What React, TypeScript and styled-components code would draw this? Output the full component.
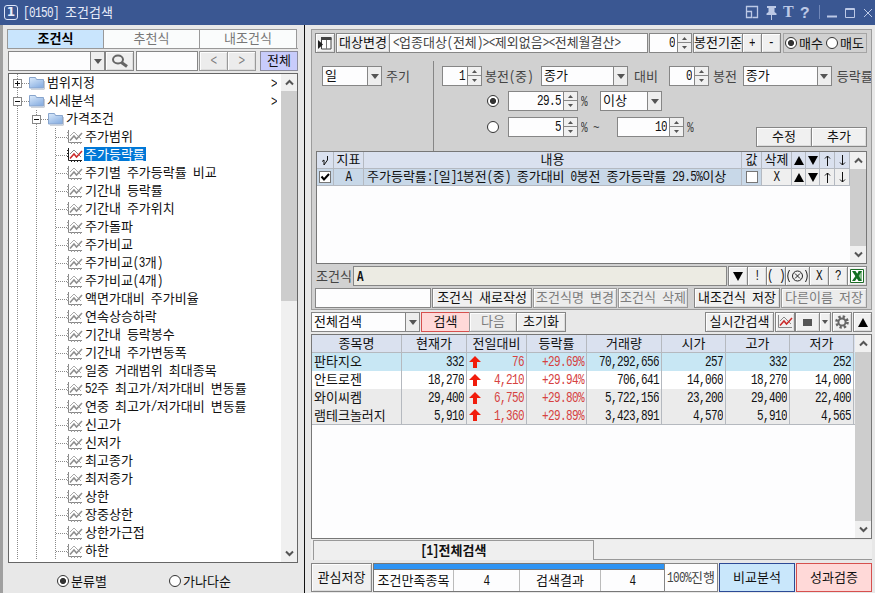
import React from "react";
import styled, { createGlobalStyle, css } from "styled-components";

const Global = createGlobalStyle`
  * { box-sizing: border-box; }
  body { margin: 0; overflow: hidden; }
  #root { width: 875px; height: 593px; overflow: hidden; }
`;

const border = "#868686";

/* ---------- text ---------- */
const Run = styled.span`
  display: inline-block;
  flex: none;
  height: 16px;
  line-height: 14px;
  padding-bottom: 2px;
  white-space: pre;
`;
const Latin = styled.span`
  display: inline-block;
  font-family: "Liberation Mono", monospace;
  font-size: 11px;
  letter-spacing: -0.6px;
  line-height: 12px;
  white-space: pre;
  transform: scaleY(1.25);
  transform-origin: 50% 76%;
`;
const T = ({ children }: { children: string }) => (
  <Run>
    {children.split(/([\x20-\x7e]+)/).map((s, i) =>
      s === "" ? null : i % 2 ? <Latin key={i}>{s}</Latin> : <React.Fragment key={i}>{s}</React.Fragment>
    )}
  </Run>
);

/* ---------- shell ---------- */
const Window = styled.div`
  width: 875px;
  height: 593px;
  display: flex;
  flex-direction: column;
  background: #e8e8e8;
  color: #111;
  font: 13px/16px "Noto Sans CJK KR", "Noto Sans", sans-serif;
  white-space: nowrap;
`;
const TitleBar = styled.header`
  height: 25px;
  flex: none;
  background: #3a5792;
  color: #e9eefb;
  display: flex;
  align-items: center;
  padding-left: 4px;
`;
const Badge = styled.span`
  width: 14px;
  height: 15px;
  margin-right: 5px;
  border: 1px solid #dfe7fa;
  border-radius: 3px;
  font: bold 12px/13px "DejaVu Sans", sans-serif;
  text-align: center;
`;
const TitleIcons = styled.svg`
  margin-left: auto;
  width: 130px;
  height: 25px;
`;
const Body = styled.div`
  flex: 1;
  display: flex;
  min-height: 0;
`;
const Left = styled.aside`
  width: 305px;
  flex: none;
  border-left: 3px solid #a0a0a0;
  border-right: 1px solid #111;
  padding: 4px 0 0 4px;
`;
const Right = styled.main`
  flex: 1;
  min-width: 0;
  padding: 4px 3px 0 6px;
`;

/* ---------- basic controls ---------- */
type Size = { $w: number; $ml?: number };
const sized = css<Size>`
  width: ${(p) => p.$w}px;
  margin-left: ${(p) => p.$ml ?? 0}px;
  flex: none;
`;
const Line = styled.div<{ $h?: number; $mt?: number; $pl?: number }>`
  display: flex;
  height: ${(p) => p.$h ?? 20}px;
  margin-top: ${(p) => p.$mt ?? 0}px;
  padding-left: ${(p) => p.$pl ?? 0}px;
  align-items: stretch;
`;
const tones = {
  normal: ["#f0f0f0", border, "#111"],
  disabled: ["#ececec", "#999", "#7c7c7c"],
  lilac: ["#c8ccfb", "#8c8c9c", "#111"],
  pink: ["#ffd9d8", "#d6504e", "#111"],
  sky: ["#c9e7fb", "#2c4a96", "#111"],
};
const Button = styled.button<Size & { $tone?: keyof typeof tones }>`
  ${sized}
  padding: 0;
  height: 100%;
  display: flex;
  align-items: center;
  justify-content: center;
  font: inherit;
  background: ${(p) => tones[p.$tone ?? "normal"][0]};
  border: 1px solid ${(p) => tones[p.$tone ?? "normal"][1]};
  color: ${(p) => tones[p.$tone ?? "normal"][2]};
  box-shadow: ${(p) => (p.$tone && p.$tone !== "disabled" ? "none" : "inset 1px 1px #fdfdfd, inset -1px -1px #dcdcdc")};
`;
const Field = styled.div<Size & { $right?: boolean; $center?: boolean; $bg?: string; $color?: string }>`
  ${sized}
  display: flex;
  align-items: center;
  justify-content: ${(p) => (p.$right ? "flex-end" : p.$center ? "center" : "flex-start")};
  padding: 0 ${(p) => (p.$center ? 0 : 3)}px;
  background: ${(p) => p.$bg ?? "#fdfdfe"};
  color: ${(p) => p.$color ?? "#111"};
  border: 1px solid ${border};
`;
const Caption = styled.span<{ $ml?: number; $w?: number; $dark?: boolean }>`
  ${(p) => (p.$w ? `width: ${p.$w}px;` : "")}
  height: 16px;
  flex: none;
  margin-left: ${(p) => p.$ml ?? 0}px;
  color: ${(p) => (p.$dark ? "#111" : "#444")};
  align-self: center;
`;
const Split = styled.div<Size>`
  ${sized}
  display: flex;
  border: 1px solid ${border};
  background: #fdfdfe;
`;
const SplitText = styled.div<{ $right?: boolean }>`
  flex: 1;
  min-width: 0;
  display: flex;
  align-items: center;
  padding: 0 2px;
  justify-content: ${(p) => (p.$right ? "flex-end" : "flex-start")};
`;
const SplitKnob = styled.div`
  width: 14px;
  background: #eee;
  border-left: 1px solid ${border};
  display: flex;
  align-items: center;
  justify-content: center;
`;
const SpinColumn = styled.div`
  width: 14px;
  border-left: 1px solid ${border};
  background: #f0f0f0;
  display: grid;
  grid-template-rows: 1fr 1fr;
  place-items: center;
  & > :first-child {
    border-bottom: 1px solid ${border};
  }
`;
const SpinCell = styled.div`
  width: 100%;
  height: 100%;
  display: flex;
  align-items: center;
  justify-content: center;
`;
const Radio = styled.span<{ $on?: boolean; $ml?: number }>`
  width: 12px;
  height: 12px;
  flex: none;
  align-self: center;
  margin-left: ${(p) => p.$ml ?? 0}px;
  border: 1px solid #333;
  border-radius: 50%;
  background: ${(p) => (p.$on ? "radial-gradient(circle, #333 0 2.7px, #fff 3.4px)" : "#fff")};
`;
const Tri = ({ up, w = 7, c = "#555" }: { up?: boolean; w?: number; c?: string }) => (
  <svg width={w} height={Math.round(w * 0.6)} viewBox="0 0 10 6" preserveAspectRatio="none">
    <path d={up ? "M0 6 5 0l5 6z" : "M0 0h10L5 6z"} fill={c} />
  </svg>
);
const BigTri = ({ up }: { up?: boolean }) => (
  <svg width="10" height="9" viewBox="0 0 10 9">
    <path d={up ? "M0 9 5 0l5 9z" : "M0 0h10L5 9z"} fill="#000" />
  </svg>
);
const ThinArrow = ({ up }: { up?: boolean }) => (
  <svg width="7" height="11" viewBox="0 0 7 11" fill="none" stroke="#111">
    <path d={up ? "M3.5 11V1M1 3.5 3.5 1 6 3.5" : "M3.5 0v10M1 7.5 3.5 10 6 7.5"} />
  </svg>
);
const Combo = ({ w, ml, text = "" }: { w: number; ml?: number; text?: string }) => (
  <Split $w={w} $ml={ml}>
    <SplitText><T>{text}</T></SplitText>
    <SplitKnob><Tri w={8} /></SplitKnob>
  </Split>
);
const Spin = ({ w, ml, text }: { w: number; ml?: number; text: string }) => (
  <Split $w={w} $ml={ml}>
    <SplitText $right><T>{text}</T></SplitText>
    <SpinColumn>
      <SpinCell><Tri up w={5} /></SpinCell>
      <SpinCell><Tri w={5} /></SpinCell>
    </SpinColumn>
  </Split>
);

/* ---------- scroll bar ---------- */
const Track = styled.div`
  width: 16px;
  flex: none;
  background: #f0f0f0;
  display: flex;
  flex-direction: column;
`;
const TrackEnd = styled.div`
  height: 17px;
  flex: none;
  display: flex;
  align-items: center;
  justify-content: center;
`;
const Thumb = styled.div<{ $h?: number }>`
  ${(p) => (p.$h ? `height: ${p.$h}px; margin-bottom: auto;` : "flex: 1;")}
  background: #cdcdcd;
`;
const ScrollBar = ({ h }: { h?: number }) => (
  <Track>
    <TrackEnd><svg width="9" height="7" fill="none" stroke="#555" strokeWidth="2"><path d="M1 5.5 4.5 2 8 5.5" /></svg></TrackEnd>
    <Thumb $h={h} />
    <TrackEnd><svg width="9" height="7" fill="none" stroke="#555" strokeWidth="2"><path d="M1 1.5 4.5 5 8 1.5" /></svg></TrackEnd>
  </Track>
);

/* ---------- left panel ---------- */
const Tabs = styled.div`
  width: 291px;
  height: 20px;
  display: flex;
  border-bottom: 1px solid #999;
`;
const Tab = styled.div<{ $on?: boolean; $w: number }>`
  width: ${(p) => p.$w}px;
  border: 1px solid #999;
  border-width: 1px 1px 0 ${(p) => (p.$on ? 1 : 0)}px;
  display: flex;
  align-items: center;
  justify-content: center;
  background: ${(p) => (p.$on ? "#c9e5fd" : "#fafcfc")};
  color: ${(p) => (p.$on ? "#000" : "#777")};
  font-weight: ${(p) => (p.$on ? 700 : 400)};
`;
const Tree = styled.div`
  width: 290px;
  height: 490px;
  margin: 2px 0 0 1px;
  border: 1px solid #666;
  background: #fff;
  display: flex;
`;
const TreeRows = styled.div`
  flex: 1;
  overflow: hidden;
`;
const TreeRow = styled.div`
  height: 18px;
  display: flex;
  align-items: center;
`;
const Guides = styled.svg<{ $w: number }>`
  width: ${(p) => p.$w}px;
  height: 18px;
  flex: none;
`;
const TreeText = styled.span<{ $on?: boolean; $ml?: number }>`
  height: 14px;
  display: flex;
  align-items: center;
  margin: 0 0 2px ${(p) => p.$ml ?? 1}px;
  padding: 1px 1px 0;
  background: ${(p) => (p.$on ? "#0078d7" : "transparent")};
  color: ${(p) => (p.$on ? "#fff" : "#111")};
`;
const More = styled.span`
  height: 16px;
  margin-left: auto;
  margin-right: 4px;
`;
const dots = { stroke: "#8a8a8a", strokeDasharray: "1 1" };
const Folder = () => (
  <svg width="16" height="14" viewBox="0 0 16 14">
    <defs>
      <linearGradient id="fold" x1="0" y1="0" x2="0.6" y2="1">
        <stop offset="0" stopColor="#dcebfb" />
        <stop offset="1" stopColor="#8db2e3" />
      </linearGradient>
    </defs>
    <path d="M.5 12V1.5h6l1 2h7V12z" fill="url(#fold)" stroke="#88a5cd" />
    <path d="M2 13.2h13.3V5" fill="none" stroke="#b8bfca" />
  </svg>
);
const ChartIcon = ({ on, plain }: { on?: boolean; plain?: boolean }) => (
  <svg width="16" height="14" viewBox="0 0 16 14" fill="none">
    <path d="M1.500 0v12.500h13.500" stroke={on && !plain ? "#222" : "#888"} />
    {!plain && (
      <path d="M0 2.500h2M0 5.500h2M0 8.500h2M4.500 12v2M7.500 12v2M10.500 12v2M13.500 12v2" stroke={on ? "#222" : "#999"} />
    )}
    <path d="M3 6l4-4 7 7" stroke={on ? "#888" : "#aaa"} />
    <path d="M3 10.500 7 6l2.500 3L15 3" stroke={on ? "#cb2a2a" : "#8d8d8d"} strokeWidth="1.500" />
  </svg>
);
const items = [
  "주가범위", "주가등락률", "주기별 주가등락률 비교", "기간내 등락률", "기간내 주가위치", "주가돌파", "주가비교",
  "주가비교(3개)", "주가비교(4개)", "액면가대비 주가비율", "연속상승하락", "기간내 등락봉수", "기간내 주가변동폭",
  "일중 거래범위 최대종목", "52주 최고가/저가대비 변동률", "연중 최고가/저가대비 변동률", "신고가", "신저가",
  "최고종가", "최저종가", "상한", "장중상한", "상한가근접", "하한",
];
const LeftPanel = () => (
  <Left>
    <Tabs>
      <Tab $on $w={97}><T>조건식</T></Tab>
      <Tab $w={96}><T>추천식</T></Tab>
      <Tab $w={97}><T>내조건식</T></Tab>
    </Tabs>
    <Line $h={20} $mt={2} $pl={1}>
      <Combo w={97} />
      <Button $w={29}>
        <svg width="18" height="14" viewBox="0 0 18 14" fill="none" stroke="#666">
          <ellipse cx="7" cy="5.500" rx="5" ry="4" strokeWidth="2" />
          <path d="M10.500 8.500 16 12.500" strokeWidth="3" />
        </svg>
      </Button>
      <Field $w={62} $ml={2} />
      <Button $w={29} $ml={1} $tone="disabled"><T>{"<"}</T></Button>
      <Button $w={29} $ml={-1} $tone="disabled"><T>{">"}</T></Button>
      <Button $w={38} $ml={4} $tone="lilac"><T>전체</T></Button>
    </Line>
    <Tree>
      <TreeRows>
        {["범위지정", "시세분석"].map((name, i) => (
          <TreeRow key={name}>
            <Guides $w={20}>
              <path d="M8.500 0v18M9 9.500h11" {...dots} />
              <rect x="4.500" y="5.500" width="8" height="8" fill="#fff" stroke="#888" />
              <path d={i ? "M6 9.500h5" : "M6 9.500h5M8.500 7v5"} stroke="#111" />
            </Guides>
            <Folder />
            <TreeText><T>{name}</T></TreeText>
            <More><T>{">"}</T></More>
          </TreeRow>
        ))}
        <TreeRow>
          <Guides $w={39}>
            <path d="M8.500 0v18M27.500 0v18M28 9.500h11" {...dots} />
            <rect x="23.500" y="5.500" width="8" height="8" fill="#fff" stroke="#888" />
            <path d="M25 9.500h5" stroke="#111" />
          </Guides>
          <Folder />
          <TreeText><T>가격조건</T></TreeText>
        </TreeRow>
        {items.map((name, i) => (
          <TreeRow key={name}>
            <Guides $w={58}>
              <path d="M8.500 0v18M27.500 0v18M46.500 0v18M47 9.500h11" {...dots} />
            </Guides>
            <ChartIcon on={i === 1} />
            <TreeText $on={i === 1}><T>{name}</T></TreeText>
          </TreeRow>
        ))}
      </TreeRows>
      <ScrollBar h={210} />
    </Tree>
    <Line $h={20} $mt={8}>
      <Radio $on $ml={50} />
      <Caption $ml={2} $dark $w={97}><T>분류별</T></Caption>
      <Radio $ml={1} />
      <Caption $ml={2} $dark><T>가나다순</T></Caption>
    </Line>
  </Left>
);

/* ---------- condition editor ---------- */
const Group = styled.section`
  width: 561px;
  height: 281px;
  border: 1px solid #9c9c9c;
  background: #d1d1d1;
  padding: 3px 0 0 3px;
  overflow: hidden;
`;
const RadioBox = styled.div<Size>`
  ${sized}
  display: flex;
  border: 1px solid #a5a5a5;
`;
const Setup = styled.div`
  display: flex;
  height: 90px;
  margin-top: 8px;
`;
const Period = styled.div`
  width: 119px;
  flex: none;
  border-right: 1px solid #868686;
  padding: 5px 0 0 7px;
`;
const Params = styled.div`
  flex: 1;
  min-width: 0;
  padding-top: 5px;
`;
const CondGrid = styled.div`
  width: 551px;
  height: 113px;
  margin-left: 1px;
  border: 1px solid #777;
  background: #fdfdfe;
  display: flex;
`;
const CondRow = styled.div<{ $head?: boolean }>`
  display: grid;
  grid-template-columns: 17px 30px 378px 20px 30px 14px 14px 15px 15px;
  height: 17px;
  background: ${(p) => (p.$head ? "#dae1ef" : "#c8d8e8")};
`;
const Cell = styled.div<{ $left?: boolean; $btn?: boolean }>`
  display: flex;
  align-items: center;
  justify-content: ${(p) => (p.$left ? "flex-start" : "center")};
  padding-left: ${(p) => (p.$left ? 3 : 0)}px;
  border: solid #b4b9c1;
  border-width: 0 1px 1px 0;
  background: ${(p) => (p.$btn ? "#efefef" : "transparent")};
`;
const Check = styled.span`
  width: 12px;
  height: 12px;
  display: flex;
  border: 1px solid #777;
  background: #fff;
`;
const Strong = styled.b`
  height: 16px;
`;
const arrows = [<BigTri key="a" up />, <BigTri key="b" />, <ThinArrow key="c" up />, <ThinArrow key="d" />];
const Editor = () => (
  <Group>
    <Line>
      <Button $w={20}>
        <svg width="14" height="13" viewBox="0 0 14 13">
          <path d="M3.500 1h9.500v11H3.500z" fill="#fff" stroke="#444" />
          <path d="M3 0h10.500v3H3z" fill="#444" />
          <path d="M0 3l5 4.500L0 12z" fill="#222" />
          <path d="M8.500 3v9" stroke="#777" />
        </svg>
      </Button>
      <Button $w={54} $ml={1}><T>대상변경</T></Button>
      <Field $w={259} $ml={-1} $color="#444"><T>{"<업종대상(전체)><제외없음><전체월결산>"}</T></Field>
      <Spin w={43} ml={1} text="0" />
      <Button $w={50} $ml={1}><T>봉전기준</T></Button>
      <Button $w={20} $ml={-1}><T>+</T></Button>
      <Button $w={20} $ml={-1}><T>-</T></Button>
      <RadioBox $w={84} $ml={2}>
        <Radio $on $ml={1} /><Caption $dark $ml={2}><T>매수</T></Caption>
        <Radio $ml={3} /><Caption $dark $ml={2}><T>매도</T></Caption>
      </RadioBox>
    </Line>
    <Setup>
      <Period>
        <Line><Combo w={60} text="일" /><Caption $ml={4}><T>주기</T></Caption></Line>
      </Period>
      <Params>
        <Line $pl={8}>
          <Spin w={40} text="1" />
          <Caption $ml={3} $w={49}><T>봉전(중)</T></Caption>
          <Combo w={87} ml={7} text="종가" />
          <Caption $ml={6}><T>대비</T></Caption>
          <Spin w={40} ml={11} text="0" />
          <Caption $ml={4}><T>봉전</T></Caption>
          <Combo w={89} ml={6} text="종가" />
          <Caption $ml={5}><T>등락률</T></Caption>
        </Line>
        <Line $mt={5} $pl={53}>
          <Radio $on />
          <Spin w={70} ml={9} text="29.5" />
          <Caption $ml={3} $w={6}><T>%</T></Caption>
          <Combo w={62} ml={13} text="이상" />
        </Line>
        <Line $mt={6} $pl={53}>
          <Radio />
          <Spin w={70} ml={9} text="5" />
          <Caption $ml={3} $w={18}><T>% ~</T></Caption>
          <Spin w={67} ml={18} text="10" />
          <Caption $ml={3} $w={68}><T>%</T></Caption>
          <Line $mt={10}>
            <Button $w={56} $ml={1}><T>수정</T></Button>
            <Button $w={56} $ml={-1}><T>추가</T></Button>
          </Line>
        </Line>
      </Params>
    </Setup>
    <CondGrid>
      <div>
        <CondRow $head>
          <Cell>
            <svg width="8" height="11" viewBox="0 0 8 11" fill="none" stroke="#111"><path d="M1 6.500 3 5v5L6.500 5V1" /></svg>
          </Cell>
          <Cell><T>지표</T></Cell>
          <Cell><T>내용</T></Cell>
          <Cell><T>값</T></Cell>
          <Cell><T>삭제</T></Cell>
          {arrows.map((a, i) => <Cell key={i}>{a}</Cell>)}
        </CondRow>
        <CondRow>
          <Cell>
            <Check><svg width="10" height="10" fill="none" stroke="#000" strokeWidth="2"><path d="M1.500 4.500 4 7.500l5-5.500" /></svg></Check>
          </Cell>
          <Cell><T>A</T></Cell>
          <Cell $left><T>주가등락률:[일]1봉전(중) 종가대비 0봉전 종가등락률 29.5%이상</T></Cell>
          <Cell><Check /></Cell>
          <Cell $btn><T>X</T></Cell>
          {arrows.map((a, i) => <Cell $btn key={i}>{a}</Cell>)}
        </CondRow>
      </div>
      <ScrollBar />
    </CondGrid>
    <Line $mt={2} $pl={1}>
      <Caption $w={37}><T>조건식</T></Caption>
      <Field $w={374} $bg="#ecebe3"><Strong><T>A</T></Strong></Field>
      <Button $w={20} $ml={1}><BigTri /></Button>
      <Button $w={20} $ml={-1}><T>!</T></Button>
      <Button $w={20} $ml={-1}><T>( )</T></Button>
      <Button $w={25} $ml={-1}>
        <svg width="23" height="14" viewBox="0 0 23 14" fill="none" stroke="#222">
          <path d="M3.500 1Q0 7 3.500 13M19.500 1q3.500 6 0 12" />
          <circle cx="11.500" cy="7" r="5" />
          <path d="m9 4.500 5 5m0-5-5 5" />
        </svg>
      </Button>
      <Button $w={20} $ml={-1}><T>X</T></Button>
      <Button $w={20} $ml={-1}><T>?</T></Button>
      <Button $w={20} $ml={-1}>
        <svg width="14" height="14" viewBox="0 0 14 14">
          <path d="M.5.500h13v13H.5z" fill="#fff" stroke="#1c6b26" />
          <path d="M8 2h4v9H8z" fill="#8cbf90" />
          <path d="M2 2h3.500L12 12H8.500z" fill="#137022" />
          <path d="M9 2h3L5 12H2z" fill="#137022" />
        </svg>
      </Button>
    </Line>
    <Line $mt={2}>
      <Field $w={116} />
      <Button $w={100} $ml={1}><T>조건식 새로작성</T></Button>
      <Button $w={84} $ml={1} $tone="disabled"><T>조건식명 변경</T></Button>
      <Button $w={70} $ml={1} $tone="disabled"><T>조건식 삭제</T></Button>
      <Button $w={86} $ml={6}><T>내조건식 저장</T></Button>
      <Button $w={86} $ml={1} $tone="disabled"><T>다른이름 저장</T></Button>
    </Line>
  </Group>
);

/* ---------- results ---------- */
const Results = styled.div`
  width: 561px;
  height: 205px;
  margin-top: 2px;
  border: 1px solid #777;
  background: #fdfdfe;
  display: flex;
`;
const ResultTable = styled.div`
  width: 543px;
`;
const ResultRow = styled.div<{ $bg: string; $last?: boolean }>`
  display: grid;
  grid-template-columns: 90px 65px 60px 60px 75px 64px 64px 64px;
  height: 18px;
  background: ${(p) => p.$bg};
  border-bottom: ${(p) => (p.$last ? 1 : 0)}px solid #b5b9bf;
`;
const ResultCell = styled.div<{ $align: string; $red?: boolean; $head?: boolean }>`
  display: flex;
  align-items: center;
  justify-content: ${(p) => p.$align};
  padding: 0 ${(p) => (p.$head ? 0 : 2)}px;
  border-right: 1px solid #b5b9bf;
  border-bottom: ${(p) => (p.$head ? 1 : 0)}px solid #b5b9bf;
  color: ${(p) => (p.$red ? "#d6423f" : "#111")};
`;
const heads = ["종목명", "현재가", "전일대비", "등락률", "거래량", "시가", "고가", "저가"];
const rows = [
  ["판타지오", "332", "76", "+29.69%", "70,292,656", "257", "332", "252"],
  ["안트로젠", "18,270", "4,210", "+29.94%", "706,641", "14,060", "18,270", "14,000"],
  ["와이씨켐", "29,400", "6,750", "+29.80%", "5,722,156", "23,200", "29,400", "22,400"],
  ["램테크놀러지", "5,910", "1,360", "+29.89%", "3,423,891", "4,570", "5,910", "4,565"],
];
const rowBg = ["#c8e7f4", "#ffffff", "#ebebeb", "#ebebeb"];
const PageTabs = styled.div`
  display: flex;
  width: 561px;
  height: 20px;
  margin-top: 1px;
  padding-left: 2px;
  background: #efefef;
`;
const PageTab = styled.div`
  width: 281px;
  border: solid #999;
  border-width: 1px 1px 0 1px;
  display: flex;
  align-items: center;
  justify-content: center;
  font-weight: 700;
`;
const PageRest = styled.div`
  flex: 1;
  border-bottom: 1px solid #999;
`;
const Summary = styled.div`
  width: 292px;
  margin-left: 1px;
  border: 1px solid #777;
  background: #fdfdfe;
  display: flex;
  flex-direction: column;
`;
const Progress = styled.div`
  height: 6px;
  background: #2d93f3;
  border-bottom: 1px solid #777;
`;
const SummaryCells = styled.div`
  flex: 1;
  display: grid;
  grid-template-columns: 80px 66px 81px 1fr;
`;
const SummaryCell = styled.div`
  display: flex;
  align-items: center;
  justify-content: center;
  border-right: 1px solid #bbb;
  &:last-child { border-right: 0; }
`;

const Bottom = () => (
  <>
    <Line $mt={2}>
      <Combo w={109} text="전체검색" />
      <Button $w={49} $ml={1} $tone="pink"><T>검색</T></Button>
      <Button $w={48} $ml={-1} $tone="disabled"><T>다음</T></Button>
      <Button $w={50} $ml={-1}><T>초기화</T></Button>
      <Button $w={69} $ml={139}><T>실시간검색</T></Button>
      <Button $w={20} $ml={1}><ChartIcon on plain /></Button>
      <Button $w={25}><svg width="9" height="7"><rect width="9" height="7" fill="#555" /></svg></Button>
      <Button $w={12} $ml={-1}><Tri w={6} /></Button>
      <Button $w={20} $ml={1}>
        <svg width="14" height="14" viewBox="0 0 14 14" fill="none" stroke="#666">
          <circle cx="7" cy="7" r="5.500" strokeWidth="2.600" strokeDasharray="2.300 2.020" />
          <circle cx="7" cy="7" r="3.600" strokeWidth="2" />
        </svg>
      </Button>
      <Button $w={19} $ml={1}><BigTri up /></Button>
    </Line>
    <Results>
      <ResultTable>
        <ResultRow $bg="#dae1ef">
          {heads.map((h) => <ResultCell key={h} $head $align="center"><T>{h}</T></ResultCell>)}
        </ResultRow>
        {rows.map((r, i) => (
          <ResultRow key={r[0]} $bg={rowBg[i]} $last={i === 3}>
            {r.map((v, c) => (
              <ResultCell
                key={c}
                $align={c === 0 ? "flex-start" : c === 2 ? "space-between" : "flex-end"}
                $red={c === 2 || c === 3}
              >
                {c === 2 && (
                  <svg width="12" height="13" viewBox="0 0 12 13"><path d="M6 0l6 6H8v6H4V6H0z" fill="#f11c0c" /></svg>
                )}
                <T>{v}</T>
              </ResultCell>
            ))}
          </ResultRow>
        ))}
      </ResultTable>
      <ScrollBar />
    </Results>
    <PageTabs>
      <PageTab><T>[1]전체검색</T></PageTab>
      <PageRest />
    </PageTabs>
    <Line $h={29} $mt={3}>
      <Button $w={61}><T>관심저장</T></Button>
      <Summary>
        <Progress />
        <SummaryCells>
          <SummaryCell><T>조건만족종목</T></SummaryCell>
          <SummaryCell><T>4</T></SummaryCell>
          <SummaryCell><T>검색결과</T></SummaryCell>
          <SummaryCell><T>4</T></SummaryCell>
        </SummaryCells>
      </Summary>
      <Field $w={54} $ml={-1} $center $color="#444"><T>100%진행</T></Field>
      <Button $w={76} $ml={1} $tone="sky"><T>비교분석</T></Button>
      <Button $w={76} $ml={1} $tone="pink"><T>성과검증</T></Button>
    </Line>
  </>
);

export default function App() {
  return (
    <>
      <Global />
      <Window>
        <TitleBar>
          <Badge>1</Badge>
          <T>[0150] 조건검색</T>
          <TitleIcons viewBox="745 0 130 25" fill="none" stroke="#bcc9e6">
            <path d="M746.500 11V6.500h11v11h-5M746.500 11.500h5v6h-5z" strokeWidth="1.300" />
            <path d="M767 6h9v2h-1.500v4l2 1.500V15h-10v-1.500l2-1.500V8H767zM771 15h1v5h-1z" fill="#bcc9e6" stroke="none" />
            <path d="M819.500 5v14" stroke="#7087b8" />
            <path d="M827 16.500h10" strokeWidth="2" />
            <path d="M845.500 8.500h9v9h-9zM845 9.500h10" />
            <path d="m864 9 8 8m0-8-8 8" />
            <text x="783" y="17" fill="#bcc9e6" stroke="none" fontSize="16" fontWeight="700" fontFamily="Liberation Serif, serif">T</text>
            <text x="800" y="18" fill="#bcc9e6" stroke="none" fontSize="16" fontWeight="700" fontFamily="Liberation Mono, monospace">?</text>
          </TitleIcons>
        </TitleBar>
        <Body>
          <LeftPanel />
          <Right>
            <Editor />
            <Bottom />
          </Right>
        </Body>
      </Window>
    </>
  );
}
